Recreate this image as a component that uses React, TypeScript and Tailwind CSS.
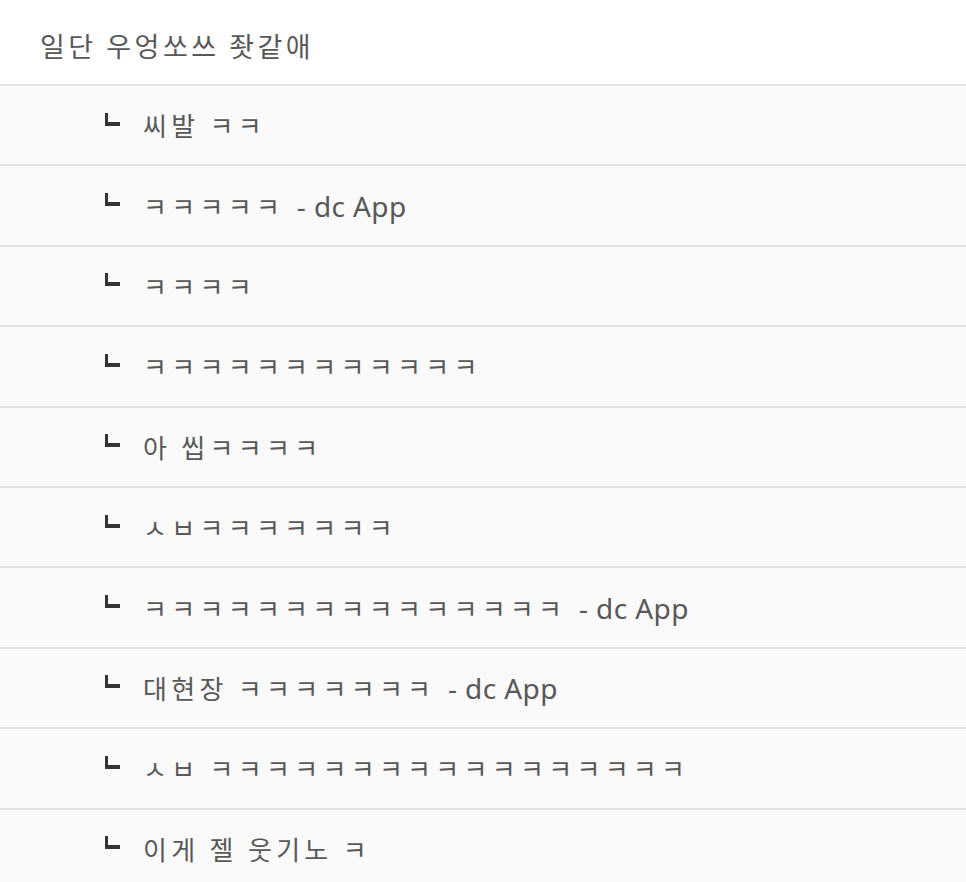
import React from 'react';

interface Reply {
  text: string;
  app?: boolean;
}

const replies: Reply[] = [
  { text: '씨발 ㅋㅋ' },
  { text: 'ㅋㅋㅋㅋㅋ', app: true },
  { text: 'ㅋㅋㅋㅋ' },
  { text: 'ㅋㅋㅋㅋㅋㅋㅋㅋㅋㅋㅋㅋ' },
  { text: '아 씹ㅋㅋㅋㅋ' },
  { text: 'ㅅㅂㅋㅋㅋㅋㅋㅋㅋ' },
  { text: 'ㅋㅋㅋㅋㅋㅋㅋㅋㅋㅋㅋㅋㅋㅋㅋ', app: true },
  { text: '대현장 ㅋㅋㅋㅋㅋㅋㅋ', app: true },
  { text: 'ㅅㅂ ㅋㅋㅋㅋㅋㅋㅋㅋㅋㅋㅋㅋㅋㅋㅋㅋㅋ' },
  { text: '이게 젤 웃기노 ㅋ' },
];

const font = "font-['Malgun_Gothic','Noto_Sans_CJK_KR',sans-serif]";

const App: React.FC = () => {
  return (
    <div className={`w-[966px] h-[882px] overflow-hidden bg-white text-[#585858] ${font}`}>
      <div className="h-[86px] flex items-center pl-[40px] pt-[6px] border-b-2 border-[#e3e3e3] bg-white">
        <span className="text-[27px] leading-none tracking-[3.5px]">일단 우엉쏘쓰 좟같애</span>
      </div>
      {replies.map((r, i) => (
        <div
          key={i}
          className="h-[80.4px] flex items-center pl-[105px] border-b-2 border-[#e3e3e3] bg-[#fafafa]"
        >
          <div className="w-[15px] h-[13px] -mt-[12px] border-l-[3px] border-b-[4px] border-[#333] shrink-0" />
          <span className="ml-[23px] text-[26px] leading-none tracking-[4.3px] whitespace-pre">
            {r.text}
            {r.app && (
              <span className="pl-[5px] font-['Noto_Sans',sans-serif] text-[28px] tracking-[0.4px]">{' - dc App'}</span>
            )}
          </span>
        </div>
      ))}
    </div>
  );
};

export default App;
